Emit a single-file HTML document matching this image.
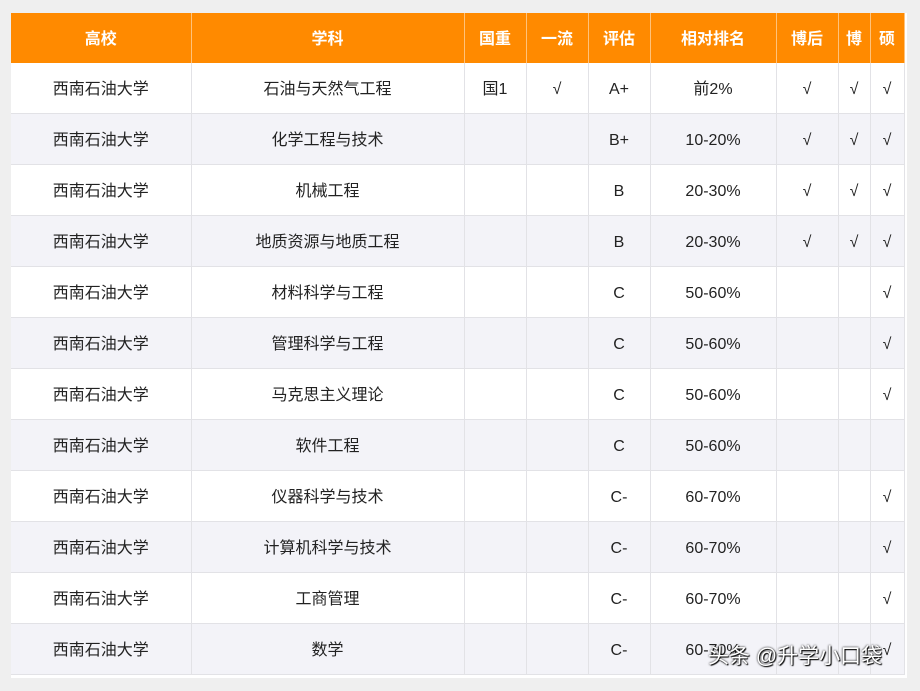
<!DOCTYPE html><html><head><meta charset="utf-8"><style>
body{margin:0;background:#efefef;width:920px;height:691px;overflow:hidden;position:relative;font-family:"Liberation Sans","Noto Sans CJK SC",sans-serif}
.w{position:absolute;left:11px;top:13px;width:896px;height:665px;background:#fff}
table{border-collapse:collapse;table-layout:fixed;position:absolute;left:0;top:0;width:893px}
td,th{text-align:center;font-size:16px;color:#222;border-right:1px solid #e2e2e6;border-bottom:1px solid #e2e2e6;height:47px;line-height:47px;padding:3px 0 0;overflow:hidden;white-space:nowrap;vertical-align:top}
th{background:#ff8a00;color:#fff;font-weight:bold;border-right:1px solid #ffc27a;border-bottom:none}
tr:nth-child(odd) td{background:#f3f3f8}
.wm{position:absolute;left:708px;top:640px;font-size:21px;color:#fff;text-shadow:0 0 2px #000,1px 1px 1px #000}
</style></head><body><div class="w"><table>
<colgroup><col style="width:180px"><col style="width:273px"><col style="width:62px"><col style="width:62px"><col style="width:62px"><col style="width:126px"><col style="width:62px"><col style="width:32px"><col style="width:34px"></colgroup>
<tr><th>高校</th><th>学科</th><th>国重</th><th>一流</th><th>评估</th><th>相对排名</th><th>博后</th><th>博</th><th>硕</th></tr>
<tr><td>西南石油大学</td><td>石油与天然气工程</td><td>国1</td><td>√</td><td>A+</td><td>前2%</td><td>√</td><td>√</td><td>√</td></tr>
<tr><td>西南石油大学</td><td>化学工程与技术</td><td></td><td></td><td>B+</td><td>10-20%</td><td>√</td><td>√</td><td>√</td></tr>
<tr><td>西南石油大学</td><td>机械工程</td><td></td><td></td><td>B</td><td>20-30%</td><td>√</td><td>√</td><td>√</td></tr>
<tr><td>西南石油大学</td><td>地质资源与地质工程</td><td></td><td></td><td>B</td><td>20-30%</td><td>√</td><td>√</td><td>√</td></tr>
<tr><td>西南石油大学</td><td>材料科学与工程</td><td></td><td></td><td>C</td><td>50-60%</td><td></td><td></td><td>√</td></tr>
<tr><td>西南石油大学</td><td>管理科学与工程</td><td></td><td></td><td>C</td><td>50-60%</td><td></td><td></td><td>√</td></tr>
<tr><td>西南石油大学</td><td>马克思主义理论</td><td></td><td></td><td>C</td><td>50-60%</td><td></td><td></td><td>√</td></tr>
<tr><td>西南石油大学</td><td>软件工程</td><td></td><td></td><td>C</td><td>50-60%</td><td></td><td></td><td></td></tr>
<tr><td>西南石油大学</td><td>仪器科学与技术</td><td></td><td></td><td>C-</td><td>60-70%</td><td></td><td></td><td>√</td></tr>
<tr><td>西南石油大学</td><td>计算机科学与技术</td><td></td><td></td><td>C-</td><td>60-70%</td><td></td><td></td><td>√</td></tr>
<tr><td>西南石油大学</td><td>工商管理</td><td></td><td></td><td>C-</td><td>60-70%</td><td></td><td></td><td>√</td></tr>
<tr><td>西南石油大学</td><td>数学</td><td></td><td></td><td>C-</td><td>60-70%</td><td></td><td></td><td>√</td></tr>
</table></div><div class="wm">头条 @升学小口袋</div></body></html>
